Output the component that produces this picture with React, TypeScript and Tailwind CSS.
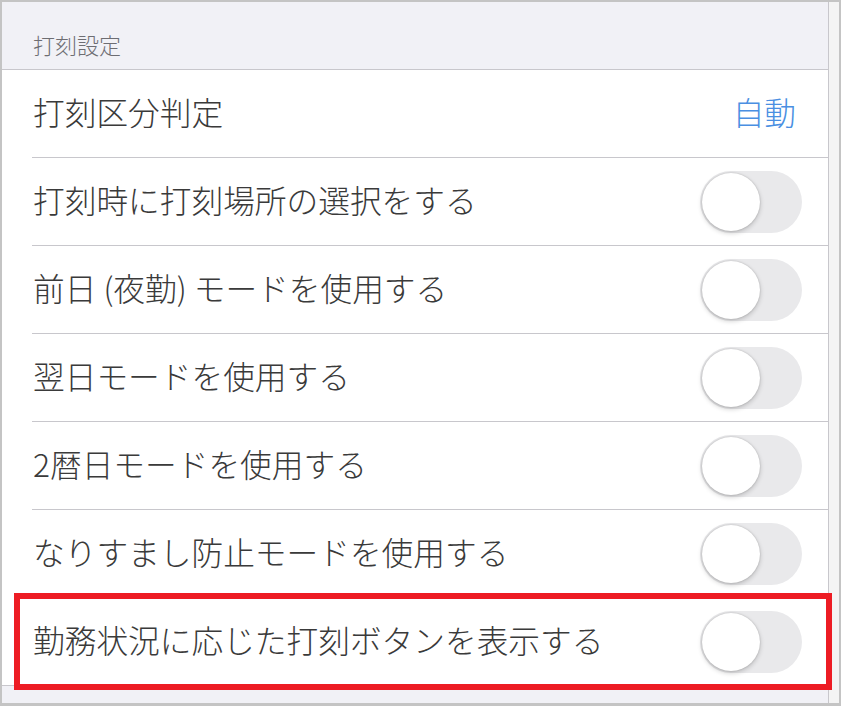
import React from 'react';

const FONT = { fontFamily: '"Noto Sans CJK JP", "Noto Sans", sans-serif' };

interface Row {
  label: string;
  kind: 'value' | 'toggle';
  value?: string;
}

const rows: Row[] = [
  { label: '打刻区分判定', kind: 'value', value: '自動' },
  { label: '打刻時に打刻場所の選択をする', kind: 'toggle' },
  { label: '前日 (夜勤) モードを使用する', kind: 'toggle' },
  { label: '翌日モードを使用する', kind: 'toggle' },
  { label: '2暦日モードを使用する', kind: 'toggle' },
  { label: 'なりすまし防止モードを使用する', kind: 'toggle' },
  { label: '勤務状況に応じた打刻ボタンを表示する', kind: 'toggle' },
];

const Toggle = () => (
  <div className="flex h-[62px] w-[102px] items-center rounded-full bg-[#e9e9eb] px-[2px]">
    <div className="h-[58px] w-[58px] rounded-full bg-white shadow-[0_2px_5px_rgba(0,0,0,0.2),0_0_2px_rgba(0,0,0,0.18)]" />
  </div>
);

export default function App() {
  return (
    <div
      className="relative flex h-[706px] w-[841px] bg-[#c4c4c4] pt-[2px] pb-[3px] pl-[2px] pr-[2px]"
      style={FONT}
    >
      {/* settings panel */}
      <div className="flex flex-1 flex-col border-r border-[#c8c7cc] bg-[#f1f1f6]">
        <div className="flex h-[68px] items-end border-b border-[#c8c7cc] pb-[14px] pl-[31px]">
          <span className="text-[22px] font-light leading-none text-[#6d6d72]">打刻設定</span>
        </div>
        <div className="bg-white">
          {rows.map((row, i) => (
            <div
              key={row.label}
              className={
                i === rows.length - 1
                  ? 'flex h-[88px] items-center border-b border-[#c8c7cc] pl-[31px] pr-[26px]'
                  : 'pl-[30px]'
              }
            >
              {i === rows.length - 1 ? (
                <>
                  <span className="flex-1 pb-[4px] text-[31.7px] font-light leading-none text-[#3a3a3a]">{row.label}</span>
                  <Toggle />
                </>
              ) : (
                <div className="flex h-[88px] items-center border-b border-[#c8c7cc] pl-[1px] pr-[26px]">
                  <span className="flex-1 pb-[4px] text-[31.7px] font-light leading-none text-[#3a3a3a]">{row.label}</span>
                  {row.kind === 'value' ? (
                    <span className="pr-[6px] pb-[4px] text-[31.7px] font-light leading-none text-[#4a8fe2]">{row.value}</span>
                  ) : (
                    <Toggle />
                  )}
                </div>
              )}
            </div>
          ))}
        </div>
      </div>
      {/* scrollbar track */}
      <div className="w-[10px] bg-[#f4f4f4]" />

      {/* highlight box */}
      <div className="absolute left-[14px] top-[593px] h-[97px] w-[818px] border-[6px] border-[#ed1c24]" />
    </div>
  );
}
